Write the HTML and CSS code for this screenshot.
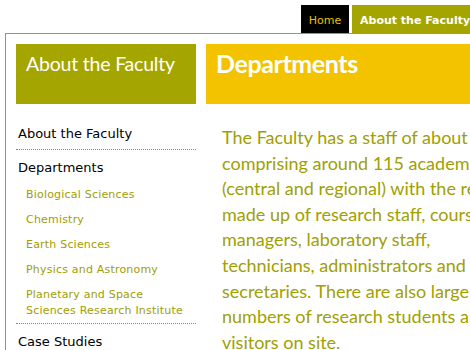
FILE: index.html
```html
<!DOCTYPE html>
<html lang="en">

<head>
    <meta charset="UTF-8">
    <meta name="viewport" content="width=device-width, initial-scale=1.0">
    <title>Departments - About the Faculty</title>
    <link rel="stylesheet" href="styles.css">
</head>

<body>

    <div class="page">

        <!-- Top tabs -->
        <div class="tabs">
            <a class="tab tab-home" href="#">Home</a>
            <a class="tab tab-section" href="#">About the Faculty</a>
        </div>

        <div class="frame">

            <!-- Sidebar -->
            <div class="side">
                <h2 class="side-title">About the Faculty</h2>
                <ul class="nav">
                    <li class="nav-item first"><a href="#">About the Faculty</a></li>
                    <li class="nav-item open">
                        <a href="#">Departments</a>
                        <ul class="subnav">
                            <li><a href="#">Biological Sciences</a></li>
                            <li><a href="#">Chemistry</a></li>
                            <li><a href="#">Earth Sciences</a></li>
                            <li><a href="#">Physics and Astronomy</a></li>
                            <li><a href="#">Planetary and Space<br>Sciences Research Institute</a></li>
                        </ul>
                    </li>
                    <li class="nav-item last"><a href="#">Case Studies</a></li>
                </ul>
            </div>

            <!-- Main content -->
            <div class="main">
                <h1 class="main-title">Departments</h1>
                <p class="intro">
                    The Faculty has a staff of about 500,<br>
                    comprising around 115 academics<br>
                    (central and regional) with the rest<br>
                    made up of research staff, course<br>
                    managers, laboratory staff,<br>
                    technicians, administrators and<br>
                    secretaries. There are also large<br>
                    numbers of research students and<br>
                    visitors on site.
                </p>
            </div>

        </div>
    </div>

</body>

</html>
```

FILE: styles.css
```css
html, body {
    margin: 0;
    padding: 0;
    overflow: hidden;
    background: #fff;
}

.page {
    width: 640px;
}

/* Top tabs */
.tabs {
    display: flex;
    gap: 3px;
    padding: 5px 0 0 301px;
    height: 28px;
}

.tab {
    display: block;
    height: 25px;
    padding-top: 3px;
    line-height: 25px;
    font-family: "DejaVu Sans", Verdana, sans-serif;
    font-size: 11px;
    text-decoration: none;
}

.tab-home {
    width: 48px;
    text-align: center;
    background: #000;
    color: #e8c200;
}

.tab-section {
    padding-left: 8px;
    padding-right: 10px;
    background: #a5a500;
    color: #fff;
    font-weight: bold;
}

/* Framed area */
.frame {
    margin-left: 5px;
    border-top: 1px solid #a5a500;
    border-left: 1px solid #a5a500;
    padding: 10px 10px 0 10px;
    display: grid;
    grid-template-columns: 180px 1fr;
    gap: 10px;
}

.side-title,
.main-title {
    margin: 0;
    height: 60px;
    box-sizing: border-box;
    color: #fff;
    font-family: Lato, "Trebuchet MS", sans-serif;
}

.side-title {
    background: #a5a500;
    font-size: 19.5px;
    font-weight: normal;
    letter-spacing: -0.2px;
    padding: 8px 10px 0 10px;
}

.main-title {
    background: #f4c300;
    font-size: 25px;
    font-weight: bold;
    letter-spacing: -0.4px;
    padding: 4px 10px 0 10px;
}

/* Sidebar menu */
.nav {
    list-style: none;
    margin: 0;
    padding: 0;
    font-family: "DejaVu Sans", Verdana, sans-serif;
}

.nav a {
    text-decoration: none;
}

.nav-item {
    font-size: 13px;
    line-height: 16px;
    padding-left: 2px;
}

.nav-item > a {
    color: #000;
}

.nav-item.first {
    padding-top: 22px;
    padding-bottom: 7px;
    border-bottom: 1px dotted #888;
}

.nav-item.open {
    padding-top: 10px;
    padding-bottom: 4px;
    border-bottom: 1px dotted #888;
}

.nav-item.last {
    padding-top: 10px;
}

.subnav {
    list-style: none;
    margin: 0;
    padding: 2px 0 0 8px;
}

.subnav li {
    font-size: 11px;
    line-height: 16px;
    letter-spacing: 0.2px;
    margin-top: 9px;
}

.subnav a {
    color: #9e9e00;
}

/* Main text */
.intro {
    margin: 21px 0 0 16px;
    font-family: Lato, "Trebuchet MS", sans-serif;
    font-size: 18px;
    line-height: 25.6px;
    color: #a0a000;
    white-space: nowrap;
}
```
